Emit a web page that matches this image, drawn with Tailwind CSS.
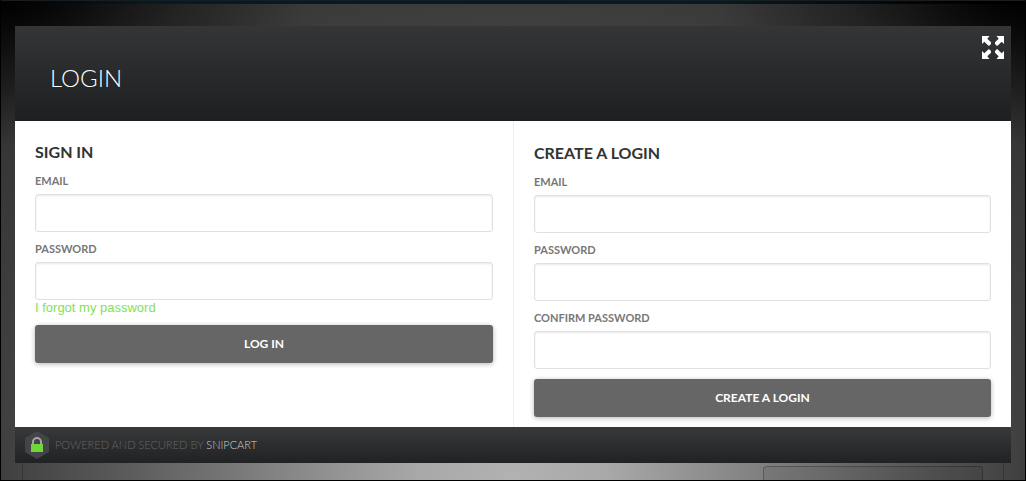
<!DOCTYPE html>
<html lang="en">
<head>
<meta charset="utf-8">
<meta name="viewport" content="width=device-width, initial-scale=1">
<title>Login</title>
<script src="https://cdn.jsdelivr.net/npm/@tailwindcss/browser@4"></script>
</head>
<body class="relative flex min-h-screen flex-col overflow-x-hidden border border-t-0 border-black bg-[radial-gradient(ellipse_30%_30%_at_0%_0%,#000_0%,rgba(0,0,0,0.5)_40%,transparent_100%),radial-gradient(ellipse_30%_30%_at_100%_0%,#000_0%,rgba(0,0,0,0.5)_40%,transparent_100%),radial-gradient(ellipse_62%_115%_at_50%_100%,#b2b2b2_0%,#a8a8a8_15%,#8c8c8c_32%,#5c5c5c_60%,#404040_80%,#363636_100%,#0a0a0a_130%)] font-['Lato',sans-serif]">
  <div class="h-1 border-t border-[#1c1c1c] bg-[linear-gradient(90deg,#000_0%,#001c2c_15%,#001c2c_70%,#000_95%)]"></div>

  <main class="relative z-10 mx-[14px] mt-[22px] flex flex-col">
    <header class="flex items-start justify-between bg-linear-to-b from-[#343536] to-[#1e1f20] pr-[7px] pl-[35px]">
      <h1 class="pt-[41px] pb-[33px] text-2xl/[21px] font-light text-white">LOGIN</h1>
      <button type="button" aria-label="Toggle full screen" class="mt-[10px]">
        <svg class="size-[23px]" viewBox="0 0 23 23" fill="#fff" aria-hidden="true">
          <path id="arrow" d="M1 0h7.500L6.300 2.700 10 6.300V8L8.200 9.700H7.500L3.300 5.700 1 8z"/>
          <use href="#arrow" transform="matrix(-1 0 0 1 24 0)"/>
          <use href="#arrow" transform="matrix(1 0 0 -1 0 23)"/>
          <use href="#arrow" transform="matrix(-1 0 0 -1 24 23)"/>
        </svg>
      </button>
    </header>

    <div class="grid grid-cols-2 bg-white">
      <form class="px-5 pt-[19px] pb-[10px]">
        <h2 class="text-base/6 font-bold text-[#333]">SIGN IN</h2>
        <div class="mt-[7px] flex flex-col gap-[3px]">
          <label for="login-email" class="text-[11px]/5 font-bold text-[#777]">EMAIL</label>
          <input id="login-email" type="email" class="h-[38px] w-full rounded-[3px] border border-[#e0e0e0] bg-white px-3 text-sm shadow-[inset_0_1px_2px_rgba(0,0,0,0.09)]">
        </div>
        <div class="mt-[7px] flex flex-col gap-[3px]">
          <label for="login-password" class="text-[11px]/5 font-bold text-[#777]">PASSWORD</label>
          <input id="login-password" type="password" class="h-[38px] w-full rounded-[3px] border border-[#e0e0e0] bg-white px-3 text-sm shadow-[inset_0_1px_2px_rgba(0,0,0,0.09)]">
        </div>
        <a href="#forgot" class="block w-fit font-['Liberation_Sans',sans-serif] text-[13px]/4 text-[#83e154]">I forgot my password</a>
        <button type="submit" class="mt-[9px] h-[38px] w-full rounded-[3px] bg-[#666] text-xs font-bold text-white shadow-[0_1px_5px_rgba(0,0,0,0.3)]">LOG IN</button>
      </form>

      <form class="border-l border-[#eee] px-5 pt-5 pb-[10px]">
        <h2 class="text-base/6 font-bold text-[#333]">CREATE A LOGIN</h2>
        <div class="mt-[7px] flex flex-col gap-[3px]">
          <label for="new-email" class="text-[11px]/5 font-bold text-[#777]">EMAIL</label>
          <input id="new-email" type="email" class="h-[38px] w-full rounded-[3px] border border-[#e0e0e0] bg-white px-3 text-sm shadow-[inset_0_1px_2px_rgba(0,0,0,0.09)]">
        </div>
        <div class="mt-[7px] flex flex-col gap-[3px]">
          <label for="new-password" class="text-[11px]/5 font-bold text-[#777]">PASSWORD</label>
          <input id="new-password" type="password" class="h-[38px] w-full rounded-[3px] border border-[#e0e0e0] bg-white px-3 text-sm shadow-[inset_0_1px_2px_rgba(0,0,0,0.09)]">
        </div>
        <div class="mt-[7px] flex flex-col gap-[3px]">
          <label for="confirm-password" class="text-[11px]/5 font-bold text-[#777]">CONFIRM PASSWORD</label>
          <input id="confirm-password" type="password" class="h-[38px] w-full rounded-[3px] border border-[#e0e0e0] bg-white px-3 text-sm shadow-[inset_0_1px_2px_rgba(0,0,0,0.09)]">
        </div>
        <button type="submit" class="mt-[10px] h-[38px] w-full rounded-[3px] bg-[#666] text-xs font-bold text-white shadow-[0_1px_5px_rgba(0,0,0,0.3)]">CREATE A LOGIN</button>
      </form>
    </div>

    <footer class="flex h-9 items-center gap-[6px] bg-linear-to-b from-[#37393a] to-[#212223] px-[10px]">
      <svg class="h-7 w-6" viewBox="0 0 24 28" aria-hidden="true">
        <path d="M12 0l12 7v14l-12 7L0 21V7z" fill="#444546"/>
        <path d="M8 14v-3a4 4 0 0 1 8 0v3" fill="none" stroke="#a5a5a5" stroke-width="2"/>
        <path d="M6 13h12v8H6z" fill="#6fd63c"/>
      </svg>
      <p class="text-[11px] font-light text-[#66686a]">POWERED AND SECURED BY <a href="#snipcart" class="text-[#d0d0d0]">SNIPCART</a></p>
    </footer>
  </main>

  <div class="mx-[21px] flex flex-1 justify-end border-x border-black/20 pt-[3px] pr-5" aria-hidden="true">
    <div class="w-[220px] rounded-t border border-b-0 border-black/25 bg-black/5"></div>
  </div>
</body>
</html>
